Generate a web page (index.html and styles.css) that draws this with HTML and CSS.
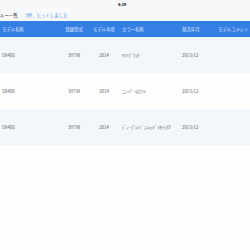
FILE: index.html
```html
<!DOCTYPE html>
<html lang="ja">
<head>
<meta charset="utf-8">
<link rel="stylesheet" href="styles.css">
</head>
<body>
<div class="status">8:29</div>
<div class="title-row">
  <span class="title">ルー一覧</span>
  <span class="hits">3件、ヒットしました</span>
</div>
<div class="table">
  <div class="row head">
    <div class="c c1">モデル名称</div>
    <div class="c c2">登録型式</div>
    <div class="c c3">モデル年度</div>
    <div class="c c4">カラー名称</div>
    <div class="c c5">発売年月</div>
    <div class="c c6">モデルコメント</div>
  </div>
  <div class="row tint">
    <div class="c c1">SR400</div>
    <div class="c c2">3HTW</div>
    <div class="c c3">2014</div>
    <div class="c c4">ﾔﾏﾊﾌﾞﾗｯｸ</div>
    <div class="c c5">2013/12</div>
    <div class="c c6"></div>
  </div>
  <div class="row">
    <div class="c c1">SR400</div>
    <div class="c c2">3HTW</div>
    <div class="c c3">2014</div>
    <div class="c c4">ﾆｭｰﾊﾟｰﾙﾎﾜｲﾄ</div>
    <div class="c c5">2013/12</div>
    <div class="c c6"></div>
  </div>
  <div class="row tint">
    <div class="c c1">SR400</div>
    <div class="c c2">3HTW</div>
    <div class="c c3">2014</div>
    <div class="c c4">ﾃﾞｨｰﾌﾟﾚｲｼﾞｮﾝﾚｯﾄﾞﾒﾀﾘｯｸ3</div>
    <div class="c c5">2013/12</div>
    <div class="c c6"></div>
  </div>
</div>
</body>
</html>
```
FILE: styles.css
```css
html, body {
  margin: 0;
  padding: 0;
  background: #fdfdfd;
  overflow: hidden;
  width: 250px;
  height: 250px;
  font-family: "Noto Sans CJK JP", "Noto Sans", sans-serif;
}
.status {
  height: 8px;
  background: #f6f8fa;
  font-size: 4px;
  font-weight: bold;
  color: #222;
  line-height: 8px;
  padding-left: 118px;
}
.title-row {
  height: 13px;
  background: #f6f8fa;
  display: flex;
  align-items: center;
  gap: 8px;
  font-size: 4.4px;
}
.title {
  color: #333;
}
.hits {
  color: #3f8be0;
}
.table {
  display: flex;
  flex-direction: column;
  width: 250px;
  overflow: hidden;
}
.row {
  display: grid;
  grid-template-columns: 60px 28px 32px 60px 36px 34px;
  height: 36px;
  align-items: center;
  font-size: 4.4px;
  color: #5a5a5a;
  background: #fefefe;
}
.row.tint {
  background: #f1f7fa;
}
.row.head {
  height: 16px;
  background: #347fe4;
  color: #e8f0fc;
}
.c {
  white-space: nowrap;
  overflow: hidden;
}
.c1 { padding-left: 2px; }
.c2, .c3 { text-align: center; }
.c4, .c5, .c6 { padding-left: 2px; }
```
